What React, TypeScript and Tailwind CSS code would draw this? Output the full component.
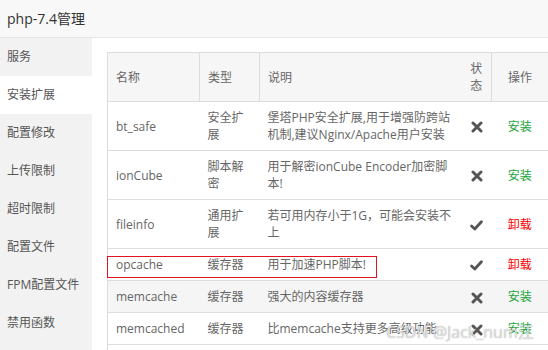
import React from "react";

type Ext = {
  name: string;
  type: string[];
  desc: string[];
  installed: boolean;
  hover?: boolean;
};

const menu = [
  "服务",
  "安装扩展",
  "配置修改",
  "上传限制",
  "超时限制",
  "配置文件",
  "FPM配置文件",
  "禁用函数",
];

const exts: Ext[] = [
  {
    name: "bt_safe",
    type: ["安全扩", "展"],
    desc: ["堡塔PHP安全扩展,用于增强防跨站", "机制,建议Nginx/Apache用户安装"],
    installed: false,
  },
  {
    name: "ionCube",
    type: ["脚本解", "密"],
    desc: ["用于解密ionCube Encoder加密脚", "本!"],
    installed: false,
  },
  {
    name: "fileinfo",
    type: ["通用扩", "展"],
    desc: ["若可用内存小于1G，可能会安装不", "上"],
    installed: true,
  },
  { name: "opcache", type: ["缓存器"], desc: ["用于加速PHP脚本!"], installed: true },
  { name: "memcache", type: ["缓存器"], desc: ["强大的内容缓存器"], installed: false, hover: true },
  { name: "memcached", type: ["缓存器"], desc: ["比memcache支持更多高级功能"], installed: false },
];

const Lines = ({ lines }: { lines: string[] }) => (
  <>
    {lines.map((l, i) => (
      <div key={i} className="whitespace-nowrap">
        {l}
      </div>
    ))}
  </>
);

const CrossIcon = () => (
  <svg width="12" height="12" viewBox="0 0 12 12" className="inline-block">
    <path d="M2 2 L10 10 M10 2 L2 10" stroke="#555" strokeWidth="3" strokeLinecap="round" />
  </svg>
);

const CheckIcon = () => (
  <svg width="13" height="11" viewBox="0 0 13 11" className="inline-block">
    <path d="M1.6 6 L4.8 9 L11.4 1.8" stroke="#555" strokeWidth="2.8" fill="none" strokeLinecap="round" strokeLinejoin="round" />
  </svg>
);

export default function App() {
  return (
    <div
      className="relative w-[548px] h-[350px] overflow-hidden bg-white text-[12px] text-[#666]"
      style={{ fontFamily: '"Open Sans", "Noto Sans CJK SC", sans-serif' }}
    >
      {/* title bar */}
      <div className="h-[38px] bg-[#f8f8f8] border-b border-[#e6e6e6] px-[7px] flex items-center text-[14px] text-[#333]">
        php-7.4管理
      </div>

      <div className="flex h-[312px]">
        {/* side menu */}
        <div className="w-[92px] shrink-0 bg-[#f2f2f2]">
          {menu.map((m, i) => (
            <div
              key={m}
              className={`h-[38px] flex items-center px-[7px] text-[#555] ${i === 1 ? "bg-white" : ""}`}
            >
              {m}
            </div>
          ))}
        </div>

        {/* content */}
        <div className="flex-1 pt-[14px] pl-[15px]">
          <table className="table-fixed border-collapse w-[441px] leading-[17px]">
            <colgroup>
              <col className="w-[92px]" />
              <col className="w-[60px]" />
              <col className="w-[202px]" />
              <col className="w-[30px]" />
              <col className="w-[57px]" />
            </colgroup>
            <thead>
              <tr className="bg-[#f6f6f6]">
                <th className="border border-[#ddd] px-[8px] py-[7px] text-left font-normal">名称</th>
                <th className="border border-[#ddd] px-[8px] py-[7px] text-left font-normal">类型</th>
                <th className="border-y border-[#ddd] px-[8px] py-[7px] text-left font-normal">说明</th>
                <th className="border-y border-[#ddd] px-0 py-[7px] text-center font-normal">
                  <div>状</div>
                  <div>态</div>
                </th>
                <th className="border border-[#ddd] px-0 py-[7px] text-center font-normal">操作</th>
              </tr>
            </thead>
            <tbody>
              {exts.map((e) => (
                <tr key={e.name} className={e.hover ? "bg-[#f5f5f5]" : ""}>
                  <td className="border-l border-b border-[#ddd] px-[8px] py-[7px] align-middle">{e.name}</td>
                  <td className="border-b border-[#ddd] px-[8px] py-[7px] align-middle">
                    <Lines lines={e.type} />
                  </td>
                  <td className="border-b border-[#ddd] px-[8px] py-[7px] align-middle">
                    <Lines lines={e.desc} />
                  </td>
                  <td className="border-b border-[#ddd] px-0 py-[7px] text-center align-middle">
                    {e.installed ? <CheckIcon /> : <CrossIcon />}
                  </td>
                  <td className="border-r border-b border-[#ddd] px-0 py-[7px] text-center align-middle">
                    {e.installed ? (
                      <span className="text-[#ff0000]">卸载</span>
                    ) : (
                      <span className="text-[#20a53a]">安装</span>
                    )}
                  </td>
                </tr>
              ))}
              {/* next row, cut off by the window */}
              <tr>
                <td colSpan={5} className="border-x border-[#ddd] h-[8px] p-0" />
              </tr>
            </tbody>
          </table>
        </div>
      </div>

      {/* annotation box round the opcache row */}
      <div className="absolute left-[107px] top-[256px] w-[270px] h-[22px] border-[1.5px] border-[#e0141e] pointer-events-none" />

      {/* watermark */}
      <div className="absolute left-[386px] top-[323px] text-[16px] leading-[18px] text-white/70 [text-shadow:0_0_1px_#888] pointer-events-none whitespace-nowrap">
        CSDN @Jack_num江
      </div>
    </div>
  );
}
